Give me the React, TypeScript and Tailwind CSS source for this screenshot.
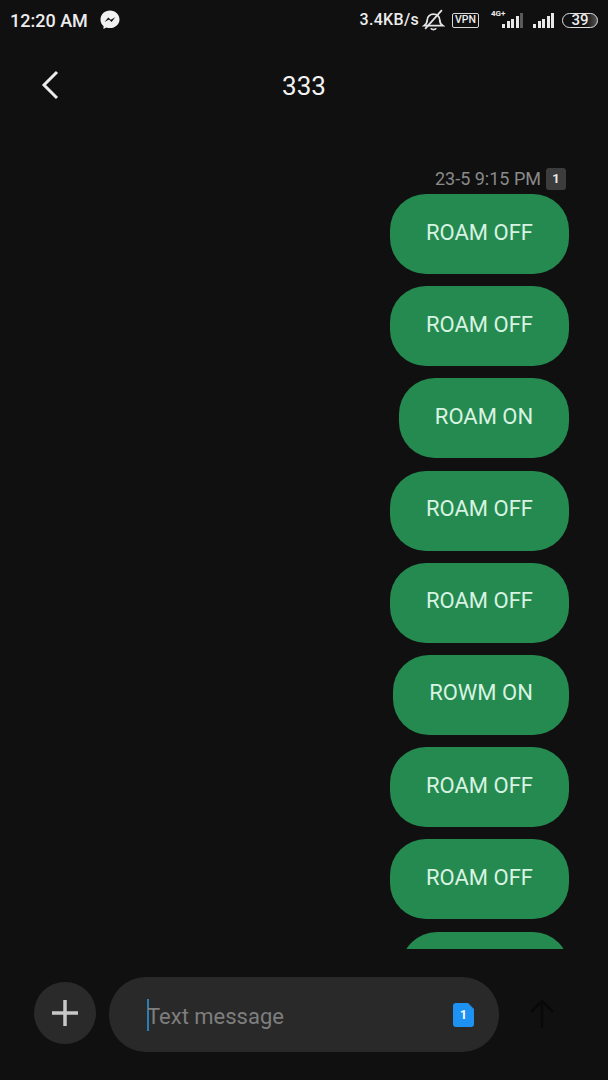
const font = { fontFamily: "Roboto, sans-serif" };

const messages = [
  { text: "ROAM OFF", width: "w-[179px]" },
  { text: "ROAM OFF", width: "w-[179px]" },
  { text: "ROAM ON", width: "w-[170px]" },
  { text: "ROAM OFF", width: "w-[179px]" },
  { text: "ROAM OFF", width: "w-[179px]" },
  { text: "ROWM ON", width: "w-[176px]" },
  { text: "ROAM OFF", width: "w-[179px]" },
  { text: "ROAM OFF", width: "w-[179px]" },
];

function Messenger() {
  return (
    <svg width="20" height="20" viewBox="0 0 20 20">
      <path d="M10 .5C4.600.5.500 4.400.500 9.500c0 2.700 1.100 5 3 6.600V19l2.800-1.500c1.100.4 2.400.6 3.700.6 5.400 0 9.500-3.900 9.500-8.600S15.400.5 10 .5z" fill="#f2f2f2" />
      <path d="M4.500 12l3.800-4.600 2.500 2.300 4.500-2.400-3.700 4.600-2.600-2.300z" fill="#111" />
    </svg>
  );
}

function MutedBell() {
  return (
    <svg width="23" height="23" viewBox="0 0 22 22" fill="none" stroke="#e4e4e4" strokeWidth="1.700">
      <path d="M2 16c2-1.500 3-3 3-5.500C5 7.500 7.500 5 11 5s6 2.500 6 5.500c0 2.500.8 4 3 5.500z" />
      <path d="M8.500 18.500c.5 1.500 4.500 1.500 5 0" />
      <path d="M19 1 3 19" />
    </svg>
  );
}

function Signal({ lit }: { lit: number }) {
  const heights = [4, 7, 9, 12, 15];
  return (
    <div className="flex items-end gap-[1.500px]">
      {heights.map((h, i) => (
        <div
          key={h}
          className={i < lit ? "w-[3px] bg-[#e8e8e8]" : "w-[3px] bg-[#5a5a5a]"}
          style={{ height: h }}
        />
      ))}
    </div>
  );
}

function StatusBar() {
  return (
    <div className="flex h-[40px] items-center justify-between pl-[10px] pr-[10px] text-[#ececec]">
      <div className="flex items-center gap-[12px]">
        <span className="text-[18px] font-medium">12:20 AM</span>
        <Messenger />
      </div>
      <div className="flex items-center">
        <span className="text-[16px] font-medium tracking-[0.3px]">3.4KB/s</span>
        <div className="ml-[3px]">
          <MutedBell />
        </div>
        <span className="ml-[7px] flex h-[15px] w-[27px] items-center justify-center rounded-[2px] border border-[#d8d8d8] text-[10.500px] leading-none font-medium">
          VPN
        </span>
        <div className="relative ml-[12px] flex h-[15px] w-[32px] items-end justify-end">
          <span className="absolute top-[-3px] left-0 text-[8px] leading-none font-bold">4G+</span>
          <Signal lit={4} />
        </div>
        <div className="ml-[10px]">
          <Signal lit={5} />
        </div>
        <div className="ml-[8px] flex h-[15px] w-[36px] items-center justify-center rounded-full border-[1.500px] border-[#dedede] bg-gradient-to-r from-[#111111] from-[65%] to-[#555555] text-[15px] leading-none font-medium">
          39
        </div>
      </div>
    </div>
  );
}

function Bubble({ text, width }: { text: string; width: string }) {
  return (
    <div className={`${width} flex h-[80px] shrink-0 items-center justify-center rounded-[36px] bg-[#258a50] pb-[4px] text-[22px] text-[#d8f3e2]`}>
      {text}
    </div>
  );
}

function Composer() {
  return (
    <div className="flex h-[131px] items-start pt-[28px] pl-[34px]">
      <div className="mt-[5px] flex h-[62px] w-[62px] items-center justify-center rounded-full bg-[#2a2a2a]">
        <svg width="28" height="28" viewBox="0 0 28 28" stroke="#c8c8c8" strokeWidth="3.500">
          <path d="M14 1v26M1 14h26" />
        </svg>
      </div>
      <div className="ml-[13px] flex h-[75px] w-[390px] items-center rounded-[37px] bg-[#292929] pr-[25px] pl-[38px]">
        <div className="h-[32px] w-[2px] bg-[#2b7fb0]" />
        <span className="mt-[3px] -ml-[2px] text-[22px] text-[#7e7e7e]">Text message</span>
        <div className="relative ml-auto flex h-[24px] w-[21px] items-center justify-center rounded-[3px] bg-[#1d92f3] text-[12px] font-bold text-white">
          1
          <div className="absolute top-0 right-0 h-0 w-0 border-t-[6px] border-l-[6px] border-t-[#292929] border-l-transparent" />
        </div>
      </div>
      <div className="mt-[22px] ml-[29px]">
        <svg width="28" height="30" viewBox="0 0 28 30" fill="none" stroke="#090909" strokeWidth="2.500">
          <path d="M14 29V2M3 13 14 2l11 11" />
        </svg>
      </div>
    </div>
  );
}

export default function App() {
  return (
    <div className="flex h-[1080px] w-[608px] flex-col overflow-hidden bg-[#101010]" style={font}>
      <StatusBar />
      <header className="relative flex h-[90px] items-center justify-center pt-[3px] text-[26px] text-[#f2f2f2]">
        <svg className="absolute top-[30px] left-[40px]" width="20" height="30" viewBox="0 0 20 30" fill="none" stroke="#ececec" strokeWidth="3">
          <path d="M17 2 4 15l13 13" />
        </svg>
        333
      </header>
      <main className="flex min-h-0 flex-1 flex-col items-end overflow-hidden pr-[39px]">
        <div className="mt-[35px] mb-[2px] flex h-[27px] items-center gap-[5px] pr-[3px] text-[18px] text-[#8a8a8a]">
          23-5 9:15 PM
          <span className="flex h-[22px] w-[20px] items-center justify-center rounded-[3px] bg-[#3c3c3c] text-[13px] font-bold text-[#e8e8e8]">
            1
          </span>
        </div>
        <div className="flex flex-col items-end gap-[12.200px]">
          {messages.map((m, i) => (
            <Bubble key={i} text={m.text} width={m.width} />
          ))}
          <div className="h-[80px] w-[168px] shrink-0 rounded-[36px] bg-[#258a50]" />
        </div>
      </main>
      <Composer />
    </div>
  );
}
